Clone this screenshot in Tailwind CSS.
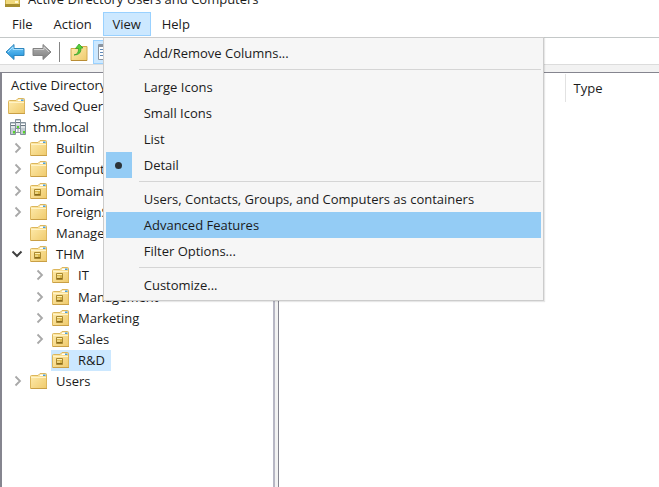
<!DOCTYPE html>
<html lang="en">
<head>
<meta charset="utf-8">
<title>Active Directory Users and Computers</title>
<script src="https://cdn.jsdelivr.net/npm/@tailwindcss/browser@4"></script>
</head>
<body class="flex h-screen flex-col overflow-hidden bg-white font-['Open_Sans','Noto_Sans',sans-serif] text-[13px] leading-[20px] text-[#1b1b1b]">
<svg class="absolute size-0" aria-hidden="true">
  <defs>
    <linearGradient id="gold" x1="0" y1="0" x2="1" y2="1"><stop offset="0" stop-color="#ffedb0"/><stop offset="1" stop-color="#efca6c"/></linearGradient>
    <linearGradient id="blue" x1="0" y1="0" x2="0" y2="1"><stop offset="0" stop-color="#7fd0fa"/><stop offset="1" stop-color="#148bd8"/></linearGradient>
    <linearGradient id="gray" x1="0" y1="0" x2="0" y2="1"><stop offset="0" stop-color="#b4b4b4"/><stop offset="1" stop-color="#7e7e7e"/></linearGradient>
  </defs>
  <symbol id="folder" viewBox="0 0 18 16">
    <path d="M.5 15.5V3.5Q.5 2.5 1.500 2.500H8L10 .5H15.500Q16.500 .5 16.500 1.500V15.500Z" fill="url(#gold)" stroke="#dcb65c"/>
    <path d="M10.500 1.500H15.500V3H9.500Z" fill="#fff"/><path d="M13 1.500H15.500V3H13Z" fill="#4a9fdc"/>
    <path d="M1 4.500H16" stroke="#fff3c8"/><path d="M1 15.500H17" stroke="#c99f45"/>
  </symbol>
  <symbol id="ou" viewBox="0 0 18 16">
    <use href="#folder"/>
    <path d="M4.500 6.500H10.500V12.500H4.500Z" fill="#d9b64a" stroke="#a88832"/>
    <path d="M5 7.500H10M5 10H8" stroke="#fff0b0"/><path d="M5 11.500H10" stroke="#8a6a18"/>
  </symbol>
  <symbol id="closed" viewBox="0 0 8 12"><path d="M1.500 1.500L6 6L1.500 10.500" fill="none" stroke="#a8a8a8" stroke-width="1.800"/></symbol>
  <symbol id="open" viewBox="0 0 12 8"><path d="M1.500 1.500L6 6L10.500 1.500" fill="none" stroke="#404040" stroke-width="2"/></symbol>
  <symbol id="domain" viewBox="0 0 18 18">
    <g fill="#c3ccd3" stroke="#84919b"><path d="M6.500 1.500H11.500V10.500H6.500Z"/><path d="M1.500 4.500H6.500V16.500H1.500Z"/><path d="M11.500 4.500H16.500V16.500H11.500Z"/></g>
    <path d="M7 3.500H11M7 6H11M2 6.500H6M2 9H6M12 6.500H16M12 9H16" stroke="#fff"/>
    <path d="M7 4.500H11M2 7.500H6M12 7.500H16" stroke="#68757f"/>
    <path d="M9 10.500V14.500M6 14.500H12" stroke="#8b969d"/>
    <path d="M4 13H6V15.500H4ZM14 13H16V15.500H14ZM8 8H10V10H8Z" fill="#56d22c"/>
  </symbol>
</svg>

<header class="flex h-[11px] shrink-0 items-end gap-2 overflow-hidden pl-[5px]">
  <svg class="mb-1 h-4 w-[15px] shrink-0" viewBox="0 0 15 16"><path d="M.5 .5H14.500V15.500H.5Z" fill="#f0d97c" stroke="#c9ae49"/><path d="M0 13H15V16H0Z" fill="#a68e2e"/><path d="M10 10H13V12H10Z" fill="#fff8cf"/></svg>
  <h1 class="mb-[2px] whitespace-nowrap">Active Directory Users and Computers</h1>
</header>

<nav class="flex h-[26px] shrink-0 items-start gap-px pt-px pl-[2px]" aria-label="Menu bar">
  <button class="h-6 px-[10px]">File</button>
  <button class="h-6 px-[10px]">Action</button>
  <div class="relative">
    <button class="h-6 w-12 border border-[#99d1ff] bg-[#cce8ff]" aria-expanded="true">View</button>
    <div role="menu" class="absolute top-[25px] left-0 z-10 flex w-[441px] flex-col border border-[#cccccc] bg-[#f6f6f6] p-[2px] shadow-[1px_1px_1px_#00000018]">
      <button role="menuitem" class="h-[26px] pl-[38px] text-left">Add/Remove Columns...</button>
      <hr class="mt-[3px] mb-1 ml-[33px] h-0 border-[#d5d5d5]">
      <button role="menuitemradio" class="h-[26px] pl-[38px] text-left">Large Icons</button>
      <button role="menuitemradio" class="h-[26px] pl-[38px] text-left">Small Icons</button>
      <button role="menuitemradio" class="h-[26px] pl-[38px] text-left">List</button>
      <button role="menuitemradio" aria-checked="true" class="flex h-[26px] items-center gap-3 text-left">
        <span class="flex size-[26px] items-center justify-center bg-[#94ccf5]"><span class="size-[7px] rounded-full bg-[#2c3338]"></span></span>Detail</button>
      <hr class="mt-[3px] mb-1 ml-[33px] h-0 border-[#d5d5d5]">
      <button role="menuitem" class="h-[26px] pl-[38px] text-left whitespace-nowrap">Users, Contacts, Groups, and Computers as containers</button>
      <button role="menuitem" class="h-[26px] bg-[#94ccf5] pl-[38px] text-left">Advanced Features</button>
      <button role="menuitem" class="h-[26px] pl-[38px] text-left">Filter Options...</button>
      <hr class="mt-[3px] mb-1 ml-[33px] h-0 border-[#d5d5d5]">
      <button role="menuitem" class="h-[26px] pl-[38px] text-left">Customize...</button>
    </div>
  </div>
  <button class="h-6 px-[10px]">Help</button>
</nav>

<div role="toolbar" class="flex h-7 shrink-0 items-center overflow-hidden border-y border-t-[#c4c8c8] border-b-[#dcdcdc] pt-[2px] pl-[5px]">
  <button aria-label="Back"><svg class="h-[18px] w-5" viewBox="0 0 20 18"><path d="M1 9L9 1.500V5.500H19V12.500H9V16.500Z" fill="url(#blue)" stroke="#2f86bd"/><path d="M3 9L8 4V6.500H18" fill="none" stroke="#a9e0ff"/></svg></button>
  <button class="ml-[7px]" aria-label="Forward"><svg class="h-[18px] w-5" viewBox="0 0 20 18"><path d="M19 9L11 1.500V5.500H1V12.500H11V16.500Z" fill="url(#gray)" stroke="#828282"/><path d="M17 9L12 4V6.500H2" fill="none" stroke="#cfcfcf"/></svg></button>
  <span class="mx-[7px] h-5 w-px bg-[#858585]"></span>
  <button class="ml-[3px]" aria-label="Up one level"><svg class="h-[18px] w-[18px]" viewBox="0 0 18 18"><path d="M1 17.500V5.500H9L11 3.500H17V17.500Z" fill="url(#gold)" stroke="#d3a94c"/><path d="M1 17.500H17" stroke="#b98d35"/><path d="M4 12Q9 11 8.500 5.500H5.500L9 1L13 5H11Q11.500 12 4 12Z" fill="#55cf38" stroke="#2e9b25" stroke-width=".7"/></svg></button>
  <button class="ml-[5px] flex h-6 w-6 items-center border border-[#99d1ff] bg-[#cce8ff] pl-1" aria-label="Show console tree"><svg class="h-4 w-4" viewBox="0 0 16 16"><path d="M.5 .5H15.500V15.500H.5Z" fill="#fff" stroke="#8a94a0"/><path d="M1 2H15" stroke="#8a94a0" stroke-width="2"/><path d="M2 5.500H7M2 8.500H7M2 11.500H7" stroke="#5f88b8"/></svg></button>
</div>

<main class="flex min-h-0 flex-1 gap-[3px] bg-[#f2f2f2] pt-[7px]">
  <section class="w-[275px] shrink-0 border-t border-r-2 border-l-2 border-t-[#85858f] border-r-[#b7b7c4] border-l-[#85858f] bg-white pt-px">
    <ul role="tree" class="flex h-[318px] flex-col whitespace-nowrap *:flex *:flex-1 *:items-center">
      <li class="pl-[9px]">Active Directory Users and Computers</li>
      <li class="pl-[6px]"><svg class="mr-[7px] h-4 w-[18px]"><use href="#folder"/></svg>Saved Queries</li>
      <li class="pl-[7px]"><svg class="mr-[6px] h-[18px] w-[18px]"><use href="#domain"/></svg>thm.local</li>
      <li class="pl-3"><svg class="mr-2 h-3 w-2"><use href="#closed"/></svg><svg class="mr-2 h-4 w-[18px]"><use href="#folder"/></svg>Builtin</li>
      <li class="pl-3"><svg class="mr-2 h-3 w-2"><use href="#closed"/></svg><svg class="mr-2 h-4 w-[18px]"><use href="#folder"/></svg>Computers</li>
      <li class="pl-3"><svg class="mr-2 h-3 w-2"><use href="#closed"/></svg><svg class="mr-2 h-4 w-[18px]"><use href="#ou"/></svg>Domain Controllers</li>
      <li class="pl-3"><svg class="mr-2 h-3 w-2"><use href="#closed"/></svg><svg class="mr-2 h-4 w-[18px]"><use href="#folder"/></svg>ForeignSecurityPrincipals</li>
      <li class="pl-7"><svg class="mr-2 h-4 w-[18px]"><use href="#folder"/></svg>Managed Service Accounts</li>
      <li class="pl-[9px]"><svg class="mr-[7px] h-2 w-3"><use href="#open"/></svg><svg class="mr-2 h-4 w-[18px]"><use href="#ou"/></svg>THM</li>
      <li class="pl-[34px]"><svg class="mr-2 h-3 w-2"><use href="#closed"/></svg><svg class="mr-2 h-4 w-[18px]"><use href="#ou"/></svg>IT</li>
      <li class="pl-[34px]"><svg class="mr-2 h-3 w-2"><use href="#closed"/></svg><svg class="mr-2 h-4 w-[18px]"><use href="#ou"/></svg>Management</li>
      <li class="pl-[34px]"><svg class="mr-2 h-3 w-2"><use href="#closed"/></svg><svg class="mr-2 h-4 w-[18px]"><use href="#ou"/></svg>Marketing</li>
      <li class="pl-[34px]"><svg class="mr-2 h-3 w-2"><use href="#closed"/></svg><svg class="mr-2 h-4 w-[18px]"><use href="#ou"/></svg>Sales</li>
      <li class="pl-[49px]" aria-selected="true"><span class="flex h-[21px] items-center bg-[#cce8ff] pr-[6px] pl-px"><svg class="mr-2 h-4 w-[18px]"><use href="#ou"/></svg>R&amp;D</span></li>
      <li class="pl-3"><svg class="mr-2 h-3 w-2"><use href="#closed"/></svg><svg class="mr-2 h-4 w-[18px]"><use href="#folder"/></svg>Users</li>
    </ul>
  </section>
  <section class="min-w-0 flex-1 border-t border-l border-[#85858f] bg-white pt-px">
    <table class="w-full table-fixed text-left">
      <thead><tr class="h-7">
        <th class="w-[286px] border-r border-[#e2e2e2] pl-2 font-normal">Name</th>
        <th class="pl-2 font-normal">Type</th>
      </tr></thead>
    </table>
  </section>
</main>
</body>
</html>
